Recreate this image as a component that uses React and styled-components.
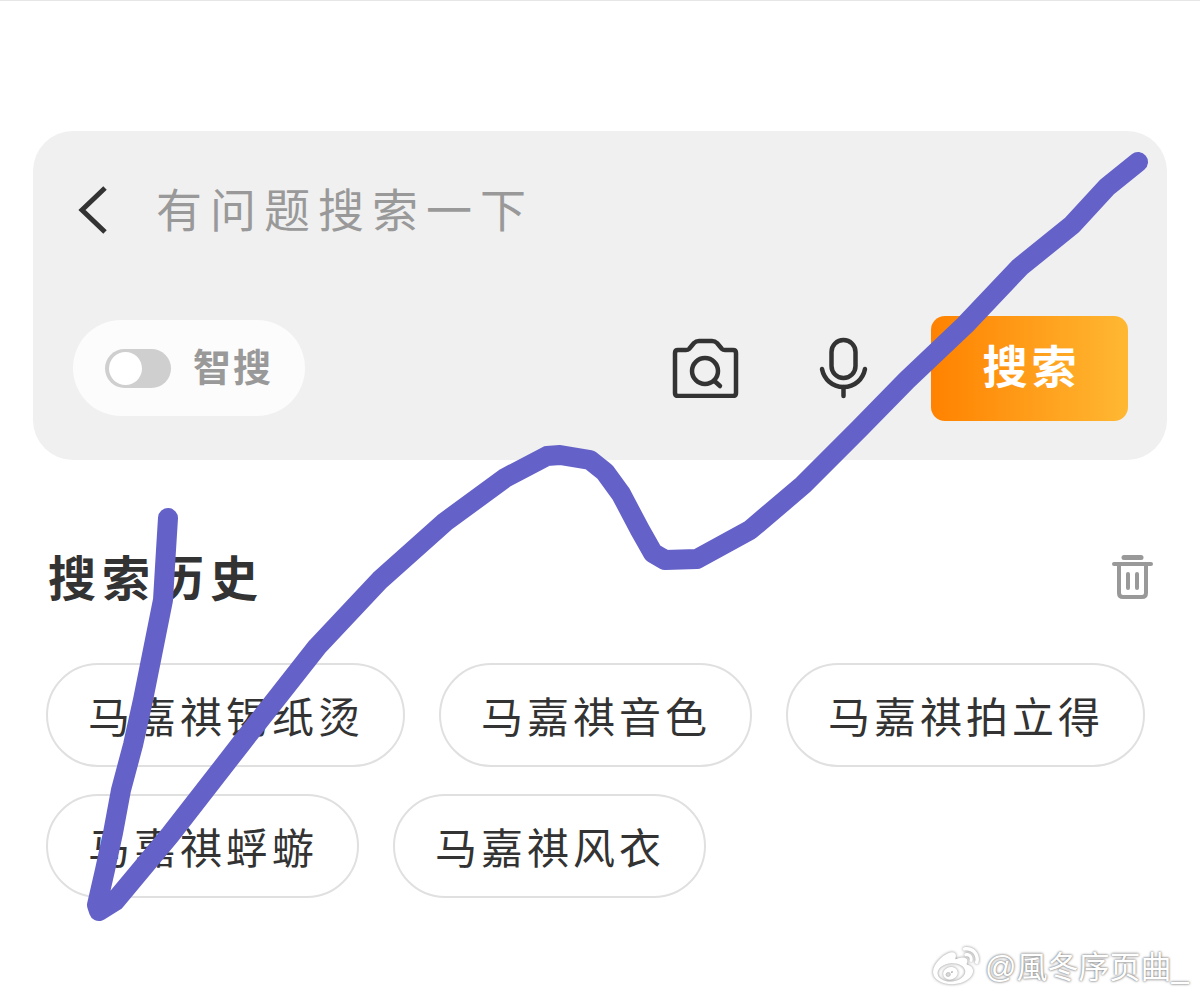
import React from "react";
import styled, { createGlobalStyle } from "styled-components";
import { FaWeibo } from "react-icons/fa";

const Global = createGlobalStyle`
  html, body { margin: 0; padding: 0; background: #fff; }
  * { box-sizing: border-box; }
`;

const FONT = `"Noto Sans CJK SC", "Noto Sans", sans-serif`;

const Page = styled.div`
  position: relative;
  width: 1200px;
  height: 997px;
  overflow: hidden;
  background: #fff;
  border-top: 1px solid #e6e6e6;
  padding: 130px 33px 0;
  font-family: ${FONT};
  color: #333;
`;

const SearchCard = styled.section`
  height: 329px;
  padding: 0 39px 39px 40px;
  border-radius: 40px;
  background: #f0f0f0;
  display: flex;
  flex-direction: column;
  gap: 27px;
`;

const QueryRow = styled.div`
  height: 158px;
  display: flex;
  align-items: center;
  gap: 48px;
  padding-left: 5px;
`;

const BackIcon = styled.svg`
  display: block;
  flex: none;
  fill: none;
  stroke: #333;
  stroke-width: 5;
`;

const Placeholder = styled.span`
  margin-bottom: 6px;
  font-size: 46px;
  letter-spacing: 8px;
  line-height: 1;
  color: #999;
`;

const ActionRow = styled.div`
  height: 105px;
  display: flex;
  align-items: center;
`;

const SmartPill = styled.div`
  width: 232px;
  height: 96px;
  margin: -1px auto 0 0;
  border-radius: 48px;
  background: #fcfcfc;
  display: flex;
  align-items: center;
  gap: 22px;
  padding-left: 32px;
`;

const Toggle = styled.span`
  width: 66px;
  height: 39px;
  border-radius: 20px;
  background: #cfcfcf;
  display: flex;
  align-items: center;
  padding-left: 4px;
  &::before {
    content: "";
    width: 33px;
    height: 33px;
    border-radius: 50%;
    background: #fff;
  }
`;

const SmartLabel = styled.span`
  margin-bottom: 6px;
  font-size: 38px;
  font-weight: 700;
  letter-spacing: 2px;
  line-height: 1;
  color: #999;
`;

const ToolIcon = styled.svg`
  display: block;
  fill: none;
  stroke: #333;
  stroke-width: 4.5;
  stroke-linecap: round;
  stroke-linejoin: round;
  flex: none;
  margin-top: -2px;
  margin-right: ${(p) => p.$after}px;
`;

const SearchButton = styled.button`
  width: 197px;
  height: 105px;
  border: 0;
  padding: 0 0 8px 4px;
  border-radius: 14px;
  background: linear-gradient(90deg, #ff8200, #ffb833);
  color: #fff;
  font-family: ${FONT};
  font-size: 45px;
  font-weight: 700;
  letter-spacing: 4px;
  line-height: 1;
`;

const History = styled.section`
  padding: 0 16px 0 13px;
`;

const HistoryHead = styled.div`
  height: 86px;
  margin: 72px -2px 0 0;
  padding: 0 0 0 2px;
  display: flex;
  align-items: center;
  justify-content: space-between;
`;

const HistoryTitle = styled.h2`
  margin: 0;
  font-size: 48px;
  font-weight: 700;
  letter-spacing: 6px;
  line-height: 1;
  color: #333;
`;

const Trash = styled.svg`
  display: block;
  margin-top: 4px;
  fill: none;
  stroke: #999;
  stroke-width: 4;
  stroke-linecap: round;
  stroke-linejoin: round;
`;

const Chips = styled.div`
  margin-top: 45px;
  display: flex;
  flex-wrap: wrap;
  gap: 27px 34px;
`;

const Chip = styled.span`
  height: 104px;
  padding: 0 39px 0 40px;
  border: 2px solid #e0e0e0;
  border-radius: 52px;
  display: flex;
  align-items: center;
  font-size: 42px;
  letter-spacing: 4px;
  line-height: 1;
  color: #333;
`;

const Scribble = styled.svg`
  position: absolute;
  left: 0;
  top: -1px;
  pointer-events: none;
`;

const Watermark = styled.div`
  position: absolute;
  left: 933px;
  top: 943px;
  display: flex;
  align-items: center;
  gap: 6px;
  color: #fff;
  font-family: "Liberation Sans", "Noto Sans CJK SC", sans-serif;
  font-size: 31px;
  line-height: 1;
  white-space: nowrap;
  text-shadow: 0 0 2px #777, 0 0 3px #999;
  svg {
    filter: drop-shadow(0 0 1.5px #888);
  }
`;

const chips = ["马嘉祺锡纸烫", "马嘉祺音色", "马嘉祺拍立得", "马嘉祺蜉蝣", "马嘉祺风衣"];

const stroke =
  "M168 518 L166 550 L163 600 L153 650 L143 700 L133 745 L121 790 L113 833 L105 870 L97 905 L99 911 L115 901 L170 835 L240 745 L317 647 L380 580 L445 522 L505 478 L547 456 L560 455 L590 460 L605 472 L621 494 L640 530 L653 553 L665 560 L697 559 L750 530 L803 485 L860 428 L907 380 L965 325 L1020 267 L1072 225 L1107 187 L1138 162";

export default function App() {
  return (
    <Page>
      <Global />
      <SearchCard>
        <QueryRow>
          <BackIcon width="30" height="48" viewBox="0 0 30 48">
            <path d="M27 2 L4 24 L27 46" />
          </BackIcon>
          <Placeholder>有问题搜索一下</Placeholder>
        </QueryRow>
        <ActionRow>
          <SmartPill>
            <Toggle />
            <SmartLabel>智搜</SmartLabel>
          </SmartPill>
          <ToolIcon width="67" height="60" viewBox="0 0 67 60" $after={79}>
            <path d="M6 12h8q2 0 3-1l5-6q2-2 5-2h13q3 0 5 2l5 6q1 1 3 1h8q3 0 3 3v40q0 3-3 3H6q-3 0-3-3V15q0-3 3-3z" />
            <circle cx="33" cy="33" r="13" />
            <path d="M42.500 43l5.500 5" />
          </ToolIcon>
          <ToolIcon width="52" height="62" viewBox="0 0 52 62" $after={61}>
            <rect x="13.500" y="3" width="24" height="38" rx="12" />
            <path d="M4 32c2 10 10 18 21.500 18s19.500-8 21.500-18" />
            <path d="M25.500 50v9" />
          </ToolIcon>
          <SearchButton>搜索</SearchButton>
        </ActionRow>
      </SearchCard>
      <History>
        <HistoryHead>
          <HistoryTitle>搜索历史</HistoryTitle>
          <Trash width="41" height="44" viewBox="0 0 41 44">
            <path d="M12 2.500h17" strokeWidth="5" />
            <path d="M2 9h37" />
            <path d="M7 9v29q0 4 4 4h19q4 0 4-4V9" />
            <path d="M16 19v14M25 19v14" />
          </Trash>
        </HistoryHead>
        <Chips>
          {chips.map((c) => (
            <Chip key={c}>{c}</Chip>
          ))}
        </Chips>
      </History>
      <Scribble width="1200" height="997" viewBox="0 0 1200 997" fill="none">
        <path d={stroke} stroke="#6462c8" strokeWidth="20" strokeLinecap="round" strokeLinejoin="round" />
      </Scribble>
      <Watermark>
        <FaWeibo size={46} />
        <span>@風冬序页曲_</span>
      </Watermark>
    </Page>
  );
}
